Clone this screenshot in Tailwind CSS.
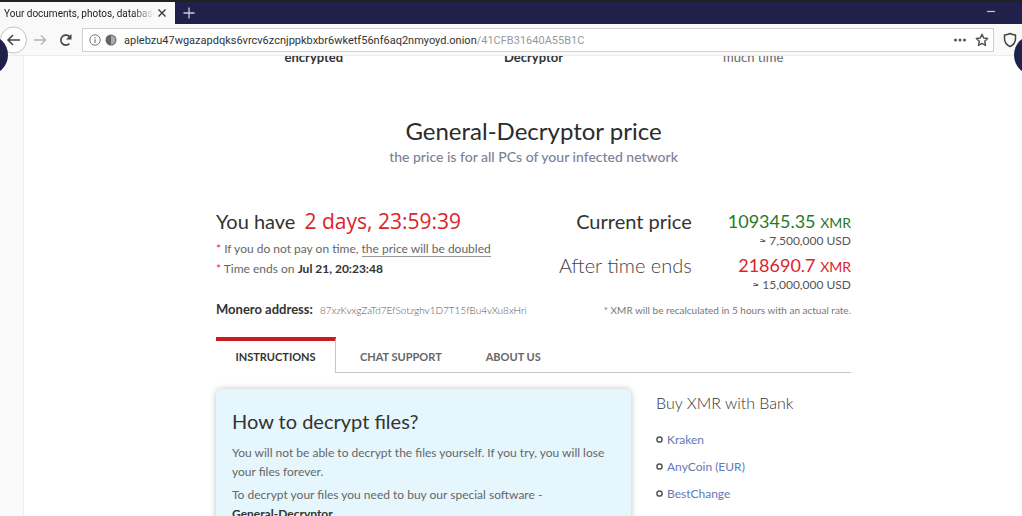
<!DOCTYPE html>
<html lang="en">
<head>
  <meta charset="UTF-8" />
  <meta name="viewport" content="width=device-width, initial-scale=1.0"/>
  <title>Your documents, photos, databases</title>
  <script src="https://cdn.jsdelivr.net/npm/@tailwindcss/browser@4"></script>
</head>
<body class="h-screen flex flex-col overflow-hidden bg-white text-[#333] font-['Lato',sans-serif]">
  <!-- Tab bar -->
  <header class="shrink-0 relative font-['Roboto',sans-serif]">
    <div class="h-6 border-t-2 border-[#222] bg-[#20214a] flex items-center">
      <div class="w-[175px] h-full bg-[#f9f9fa] flex items-center pl-1 pr-2">
        <span class="flex-1 overflow-hidden whitespace-nowrap text-[10px] text-[#222] mask-r-from-85%">Your documents, photos, databases</span>
        <button aria-label="Close tab" class="pl-0.5">
          <svg class="size-2.5" viewBox="0 0 10 10" fill="none" stroke="#333" stroke-width="1.3"><path d="M1.5 1.5l7 7M8.5 1.5l-7 7"/></svg>
        </button>
      </div>
      <button aria-label="New tab" class="ml-2">
        <svg class="size-3" viewBox="0 0 12 12" fill="none" stroke="#c9c9dc" stroke-width="1.3"><path d="M6 .5v11M.5 6h11"/></svg>
      </button>
      <button aria-label="Minimize" class="ml-auto mr-[27px]">
        <svg class="w-2 h-3" viewBox="0 0 8 12" fill="none" stroke="#c9c9dc" stroke-width="1.2"><path d="M0 4.5h8"/></svg>
      </button>
    </div>

    <!-- Toolbar -->
    <div class="h-8 border-b border-[#ececec] bg-[#f9f9fa] flex items-center pr-1">
      <button aria-label="Back" class="shrink-0">
        <svg class="size-7" viewBox="0 0 28 28" fill="none"><circle cx="13.5" cy="14" r="13" fill="#fff" stroke="#c4c4c6"/><path d="M20 14H8M13 9l-5 5 5 5" stroke="#444" stroke-width="1.6"/></svg>
      </button>
      <button aria-label="Forward" class="ml-1 shrink-0">
        <svg class="size-4" viewBox="0 0 16 16" fill="none" stroke="#b4b4b6" stroke-width="1.4"><path d="M2 8h12M9 3.5L13.5 8 9 12.5"/></svg>
      </button>
      <button aria-label="Reload" class="ml-2.5 shrink-0">
        <svg class="size-4" viewBox="0 0 16 16" fill="none" stroke="#444" stroke-width="1.6"><path d="M11.4 11.6A5 5 0 1 1 12 5.3"/><path d="M13.5 2v5.5H8z" fill="#444" stroke="none"/></svg>
      </button>
      <div class="ml-2 h-6 flex-1 border border-[#cfcfd2] bg-white flex items-center pl-1.5 pr-1">
        <svg class="size-3 shrink-0" viewBox="0 0 12 12" fill="none" stroke="#777"><circle cx="6" cy="6" r="5.2"/><path d="M6 5.3v3.7M6 3v1.2" stroke-width="1.2"/></svg>
        <svg class="ml-1 size-3 shrink-0" viewBox="0 0 12 12"><circle cx="6" cy="6" r="5.5" fill="#666"/><path d="M6 1.5a4.5 4.5 0 0 1 0 9z" fill="#aaa"/></svg>
        <p class="ml-[7px] pt-1 flex-1 text-[11px] text-[#333]">aplebzu47wgazapdqks6vrcv6zcnjppkbxbr6wketf56nf6aq2nmyoyd.onion<span class="text-[#999]">/41CFB31640A55B1C</span></p>
        <button aria-label="Page actions">
          <svg class="w-3.5 h-3" viewBox="0 0 14 12" fill="#555"><circle cx="2.5" cy="6" r="1.5"/><circle cx="7" cy="6" r="1.5"/><circle cx="11.5" cy="6" r="1.5"/></svg>
        </button>
        <button aria-label="Bookmark" class="ml-2">
          <svg class="size-3.5" viewBox="0 0 14 14" fill="none" stroke="#555" stroke-width="1.5" stroke-linejoin="round"><path d="M7 1.2l1.7 3.8 4 .5-3 2.7.8 4.2L7 10.4l-3.5 2 .8-4.2-3-2.7 4-.5z"/></svg>
        </button>
      </div>
      <button aria-label="Security level" class="ml-2 shrink-0">
        <svg class="size-4" viewBox="0 0 16 16" fill="none" stroke="#444" stroke-width="1.5" stroke-linejoin="round"><path d="M8 1.5c2 1 3.5 1.3 5.5 1.5v3.5c0 4-2.2 6.5-5.5 8-3.3-1.5-5.5-4-5.5-8V3c2-.2 3.5-.5 5.5-1.5z"/></svg>
      </button>
    </div>

    <!-- Slider arrows over the page edges -->
    <div class="absolute z-10 -left-8 top-[35px] size-10 rounded-full bg-[#20214a]"></div>
    <div class="absolute z-10 -right-8 top-[35px] size-10 rounded-full bg-[#20214a]"></div>
  </header>

  <div class="flex-1 flex min-h-0">
    <div class="w-6 shrink-0 bg-[#fafafa] border-r border-[#efefef]"></div>
    <main class="flex-1 overflow-hidden pl-[21px]">
      <div class="max-w-[635px] mx-auto">
        <div class="-mt-[7px] -mx-3 grid grid-cols-3 text-center text-[13px] leading-4">
          <p class="font-bold">encrypted</p>
          <p class="font-bold">Decryptor</p>
          <p class="text-[#666]">much time</p>
        </div>

        <div class="mt-[50px] text-center">
          <h1 class="text-2xl text-[#2b2b2b]">General-Decryptor price</h1>
          <p class="text-sm leading-5 font-medium text-[#7c8296]">the price is for all PCs of your infected network</p>
        </div>

        <!-- Price and timer -->
        <section class="mt-[42px] flex justify-between">
          <div>
            <h2 class="text-xl leading-6">You have <span class="ml-1 text-[21px] text-[#d9252d] font-['Open_Sans',sans-serif]">2 days, 23:59:39</span></h2>
            <ul class="mt-1.5 text-xs leading-5 text-[#666]">
              <li><span class="text-[#e0353a]">*</span> If you do not pay on time, <span class="border-b border-[#999]">the price will be doubled</span></li>
              <li><span class="text-[#e0353a]">*</span> Time ends on <b class="text-[#333]">Jul 21, 20:23:48</b></li>
            </ul>
          </div>
          <div class="grid grid-cols-[auto_auto] gap-x-9 text-right">
            <p class="text-xl leading-6">Current price</p>
            <div>
              <p class="text-lg leading-6 text-[#1f7a2c]">109345.35 <span class="text-sm">XMR</span></p>
              <p class="text-xs leading-4 h-5 text-[#555]">≈ 7,500,000 USD</p>
            </div>
            <p class="text-xl leading-6 font-light text-[#444]">After time ends</p>
            <div>
              <p class="text-lg leading-6 text-[#d9252d]">218690.7 <span class="text-sm">XMR</span></p>
              <p class="text-xs leading-4 h-5 text-[#555]">≈ 15,000,000 USD</p>
            </div>
          </div>
        </section>
        <div class="mt-1 flex justify-between items-center leading-4">
          <p class="text-[13px] leading-4 font-bold">Monero address: <span class="ml-1 text-[10px] font-light text-[#555]">87xzKvxgZaTd7EfSotzghv1D7T15fBu4vXu8xHri</span></p>
          <p class="text-[10px] leading-4 text-[#777]">* XMR will be recalculated in 5 hours with an actual rate.</p>
        </div>

        <!-- Tabs -->
        <nav class="mt-[19px] flex text-[11px] leading-4 text-[#666]">
          <button class="w-[120px] h-9 border-t-4 border-r border-t-[#cc1a1f] border-r-[#c3c7cd] font-bold text-[#333]">INSTRUCTIONS</button>
          <div class="flex-1 border-b border-[#c3c7cd] flex gap-11 pl-6 pt-1 font-bold">
            <button>CHAT SUPPORT</button>
            <button>ABOUT US</button>
          </div>
        </nav>

        <div class="mt-4 flex">
          <article class="w-[415px] h-60 shrink-0 rounded-md bg-[#e5f6fd] pl-4 pr-3 pt-5 shadow-[0_0_6px_rgba(0,0,0,0.25)]">
            <h2 class="text-xl leading-6">How to decrypt files?</h2>
            <div class="mt-2.5 space-y-1 text-xs leading-[19px] text-[#666]">
              <p>You will not be able to decrypt the files yourself. If you try, you will lose your files forever.</p>
              <p>To decrypt your files you need to buy our special software - <b class="block text-[#333]">General-Decryptor</b></p>
            </div>
          </article>
          <aside class="pl-[25px] pt-0.5">
            <h3 class="text-base leading-6 font-light">Buy XMR with Bank</h3>
            <ul class="mt-[11px] text-xs leading-[27px] text-[#6478b8]">
              <li class="flex items-center gap-1">
                <svg class="size-[7px]" viewBox="0 0 7 7" fill="none" stroke="#555" stroke-width="1.5"><circle cx="3.5" cy="3.5" r="2.6"/></svg>
                <a href="#">Kraken</a>
              </li>
              <li class="flex items-center gap-1">
                <svg class="size-[7px]" viewBox="0 0 7 7" fill="none" stroke="#555" stroke-width="1.5"><circle cx="3.5" cy="3.5" r="2.6"/></svg>
                <a href="#">AnyCoin (EUR)</a>
              </li>
              <li class="flex items-center gap-1">
                <svg class="size-[7px]" viewBox="0 0 7 7" fill="none" stroke="#555" stroke-width="1.5"><circle cx="3.5" cy="3.5" r="2.6"/></svg>
                <a href="#">BestChange</a>
              </li>
            </ul>
          </aside>
        </div>
      </div>
    </main>
  </div>
</body>
</html>
